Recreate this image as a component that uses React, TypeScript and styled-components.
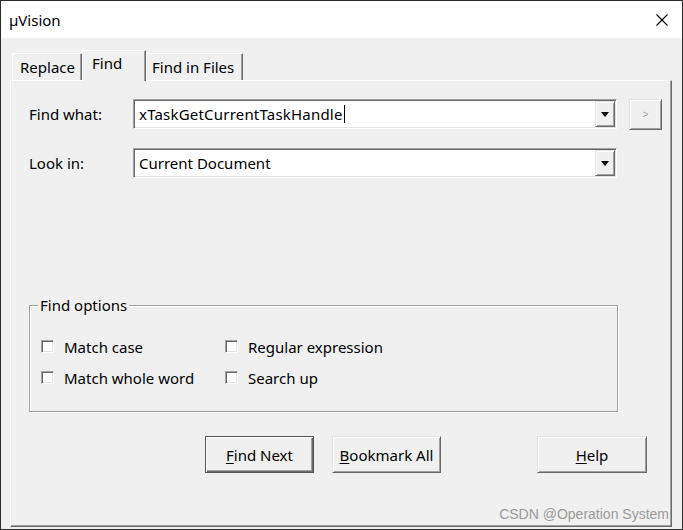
import React from 'react';
import styled, { createGlobalStyle } from 'styled-components';

const Global = createGlobalStyle`
  html, body { margin: 0; padding: 0; }
  body {
    width: 683px; height: 530px; overflow: hidden;
    font-family: "Noto Sans", "Open Sans", sans-serif;
    color: #000;
  }
`;

const Window = styled.div`
  width: 683px; height: 530px; box-sizing: border-box;
  border: 1px solid #2b2b2b;
  display: flex; flex-direction: column;
  background: #f0f0f0;
`;

const TitleBar = styled.div`
  height: 37px; flex: none; background: #fff;
  display: flex; align-items: center; justify-content: space-between;
  padding: 0 14px 0 8px;
  font-size: 15px;
`;

const CloseIcon = styled.svg`
  width: 12px; height: 12px; display: block;
`;

const Body = styled.div`
  flex: 1; display: flex; flex-direction: column;
  padding: 12px 10px 2px 9px;
  min-height: 0;
`;

const TabStrip = styled.div`
  height: 30px; flex: none;
  display: flex; align-items: flex-end;
  padding-left: 2px;
  position: relative; z-index: 1;
`;

const Tab = styled.div<{ $active?: boolean; $w: number; $pl: number }>`
  box-sizing: border-box;
  width: ${p => p.$w}px;
  height: ${p => (p.$active ? 31 : 27)}px;
  margin-bottom: ${p => (p.$active ? -1 : 0)}px;
  background: #f0f0f0;
  border-top: 1px solid #fff;
  border-left: 1px solid #fff;
  border-right: 1px solid #696969;
  box-shadow: inset -1px 0 0 #a0a0a0;
  font-size: 15px;
  display: flex; align-items: ${p => (p.$active ? 'flex-start' : 'center')};
  padding: ${p => (p.$active ? `2px 0 0 ${p.$pl}px` : `0 0 0 ${p.$pl}px`)};
`;

const Panel = styled.div`
  flex: 1; box-sizing: border-box;
  border-top: 1px solid #fff;
  border-left: 1px solid #fff;
  border-right: 1px solid #696969;
  border-bottom: 1px solid #696969;
  box-shadow: inset -1px -1px 0 #a0a0a0;
  padding: 18px 0 0 18px;
  display: flex; flex-direction: column;
`;

const Row = styled.div<{ $mt?: number }>`
  display: flex; align-items: flex-start;
  margin-top: ${p => p.$mt ?? 0}px;
`;

const Label = styled.div`
  width: 104px; height: 30px; flex: none;
  display: flex; align-items: center;
  font-size: 15px;
`;

const Combo = styled.div`
  width: 484px; height: 30px; box-sizing: border-box; flex: none;
  background: #fff;
  border-top: 1px solid #a0a0a0;
  border-left: 1px solid #a0a0a0;
  border-right: 1px solid #fff;
  border-bottom: 1px solid #fff;
  box-shadow: inset 1px 1px 0 #696969, inset -1px -1px 0 #e3e3e3;
  display: flex; align-items: center;
  padding: 1px 1px 1px 5px;
  font-size: 15px;
`;

const ComboText = styled.span<{ $sp?: number }>`
  flex: 1; white-space: nowrap; display: flex; align-items: center;
  letter-spacing: ${p => p.$sp ?? 0}px;
`;

const Caret = styled.span`
  display: inline-block; width: 1px; height: 18px; background: #000; margin-left: 1px;
`;

const DropBtn = styled.div`
  width: 20px; height: 26px; box-sizing: border-box; flex: none;
  background: #f0f0f0;
  border-top: 1px solid #e3e3e3;
  border-left: 1px solid #e3e3e3;
  border-right: 1px solid #696969;
  border-bottom: 1px solid #696969;
  box-shadow: inset 1px 1px 0 #fff, inset -1px -1px 0 #a0a0a0;
  display: flex; align-items: center; justify-content: center;
`;

const SmallBtn = styled.div`
  width: 33px; height: 31px; box-sizing: border-box; flex: none;
  margin-left: 12px;
  background: #f0f0f0;
  border-top: 1px solid #e3e3e3;
  border-left: 1px solid #e3e3e3;
  border-right: 1px solid #696969;
  border-bottom: 1px solid #696969;
  box-shadow: inset 1px 1px 0 #fff, inset -1px -1px 0 #a0a0a0;
  display: flex; align-items: center; justify-content: center;
  font-family: "Liberation Sans", sans-serif;
  font-size: 10px; color: #a0a0a0;
  text-shadow: 1px 1px 0 #fff;
`;

const Group = styled.fieldset`
  width: 589px; height: 117px; box-sizing: border-box;
  margin: 117px 0 0 0; padding: 0;
  border: 1px solid #a0a0a0;
  box-shadow: inset 1px 1px 0 #fff, 1px 1px 0 #fff;
`;

const Legend = styled.legend`
  margin-left: 8px; padding: 0 2px;
  font-size: 15px; line-height: 20px;
`;

const Options = styled.div`
  display: grid;
  grid-template-columns: 184px 184px;
  grid-auto-rows: 31px;
  padding: 16px 0 0 11px;
`;

const Check = styled.label`
  display: flex; align-items: center; font-size: 15px;
`;

const Box = styled.span`
  width: 13px; height: 13px; box-sizing: border-box; flex: none;
  background: #fff;
  border-top: 1px solid #a0a0a0;
  border-left: 1px solid #a0a0a0;
  border-right: 1px solid #fff;
  border-bottom: 1px solid #fff;
  box-shadow: inset 1px 1px 0 #696969, inset -1px -1px 0 #e3e3e3;
  margin-right: 10px;
`;

const Buttons = styled.div`
  display: flex; margin-top: 24px; padding-left: 176px;
`;

const Btn = styled.div<{ $default?: boolean; $ml?: number; $w: number }>`
  width: ${p => p.$w}px; height: 37px; box-sizing: border-box; flex: none;
  margin-left: ${p => p.$ml ?? 0}px;
  background: #f0f0f0;
  font-size: 15px;
  display: flex; align-items: center; justify-content: center;
  ${p =>
    p.$default
      ? `border: 1px solid #555;
         box-shadow: inset 1px 1px 0 #fff, inset -1px -1px 0 #696969, inset -2px -2px 0 #a0a0a0;`
      : `border-top: 1px solid #e3e3e3;
         border-left: 1px solid #e3e3e3;
         border-right: 1px solid #696969;
         border-bottom: 1px solid #696969;
         box-shadow: inset 1px 1px 0 #fff, inset -1px -1px 0 #a0a0a0;`}
  u { text-decoration: underline; text-underline-offset: 2px; }
`;

const Watermark = styled.div`
  margin-top: auto; align-self: flex-end;
  margin-right: 2px; margin-bottom: 4px;
  font-family: "Liberation Sans", Arial, sans-serif;
  font-size: 14px; line-height: 16px;
  color: #9a9a9a;
`;

const Arrow = () => (
  <svg width="8" height="5" viewBox="0 0 8 5">
    <polygon points="0,0 8,0 4,5" fill="#000" />
  </svg>
);

export default function App() {
  return (
    <>
      <Global />
      <Window>
        <TitleBar>
          <span>µVision</span>
          <CloseIcon viewBox="0 0 12 12">
            <path d="M0.5 0.5 L11.5 11.5 M11.5 0.5 L0.5 11.5" stroke="#000" strokeWidth="1.1" fill="none" />
          </CloseIcon>
        </TitleBar>
        <Body>
          <TabStrip>
            <Tab $w={70} $pl={7}>Replace</Tab>
            <Tab $w={64} $pl={9} $active>Find</Tab>
            <Tab $w={97} $pl={5}>Find in Files</Tab>
          </TabStrip>
          <Panel>
            <Row>
              <Label>Find what:</Label>
              <Combo>
                <ComboText $sp={0.2}>
                  xTaskGetCurrentTaskHandle<Caret />
                </ComboText>
                <DropBtn><Arrow /></DropBtn>
              </Combo>
              <SmallBtn>&gt;</SmallBtn>
            </Row>
            <Row $mt={18}>
              <Label>Look in:</Label>
              <Combo>
                <ComboText>Current Document</ComboText>
                <DropBtn><Arrow /></DropBtn>
              </Combo>
            </Row>
            <Group>
              <Legend>Find options</Legend>
              <Options>
                <Check><Box />Match case</Check>
                <Check><Box />Regular expression</Check>
                <Check><Box />Match whole word</Check>
                <Check><Box />Search up</Check>
              </Options>
            </Group>
            <Buttons>
              <Btn $default $w={109}><span><u>F</u>ind Next</span></Btn>
              <Btn $w={109} $ml={18}><span><u>B</u>ookmark All</span></Btn>
              <Btn $w={110} $ml={96}><span><u>H</u>elp</span></Btn>
            </Buttons>
            <Watermark>CSDN @Operation System</Watermark>
          </Panel>
        </Body>
      </Window>
    </>
  );
}
